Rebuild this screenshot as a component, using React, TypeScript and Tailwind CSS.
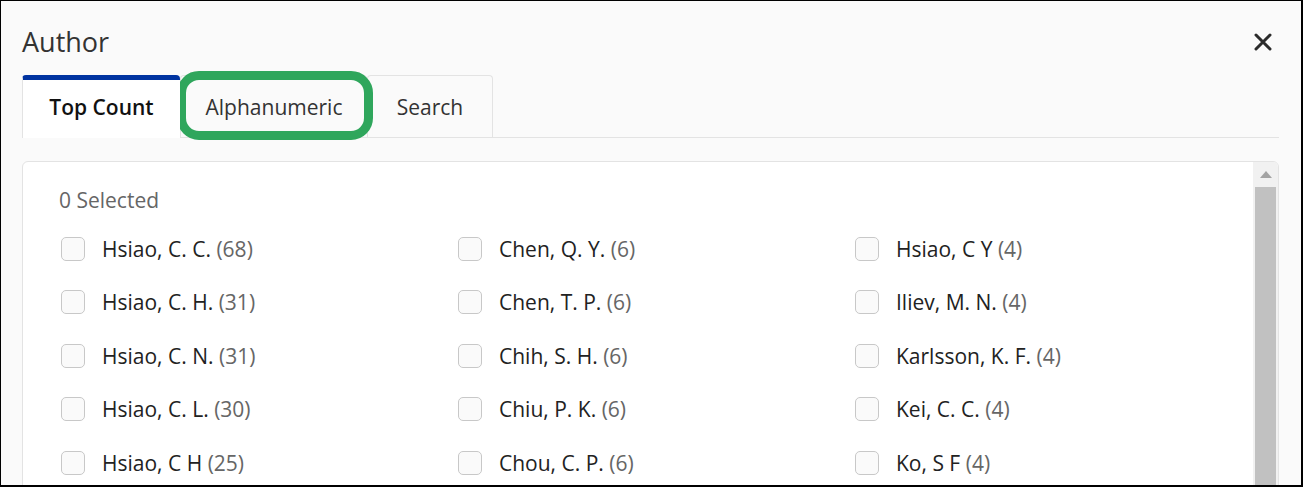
const columns = [
  [
    { name: "Hsiao, C. C.", count: 68 },
    { name: "Hsiao, C. H.", count: 31 },
    { name: "Hsiao, C. N.", count: 31 },
    { name: "Hsiao, C. L.", count: 30 },
    { name: "Hsiao, C H", count: 25 },
  ],
  [
    { name: "Chen, Q. Y.", count: 6 },
    { name: "Chen, T. P.", count: 6 },
    { name: "Chih, S. H.", count: 6 },
    { name: "Chiu, P. K.", count: 6 },
    { name: "Chou, C. P.", count: 6 },
  ],
  [
    { name: "Hsiao, C Y", count: 4 },
    { name: "Iliev, M. N.", count: 4 },
    { name: "Karlsson, K. F.", count: 4 },
    { name: "Kei, C. C.", count: 4 },
    { name: "Ko, S F", count: 4 },
  ],
];

export default function App() {
  return (
    <div
      className="h-[487px] w-[1303px] overflow-hidden bg-[#fafafa] border-l border-t border-r-2 border-b-2 border-black pl-[21px] pr-[22px]"
      style={{ fontFamily: '"Open Sans", "Liberation Sans", sans-serif' }}
    >
      {/* Header */}
      <div className="flex h-[74px] items-start justify-between pt-[22px]">
        <h2 className="text-[27px] leading-[38px] text-[#333]">Author</h2>
        <button className="mr-[7px] mt-[10px] text-[#2b2b2b]" aria-label="Close">
          <svg width="18" height="18" viewBox="0 0 18 18" fill="none" stroke="currentColor" strokeWidth="3" strokeLinecap="round">
            <path d="M2 2 L16 16 M16 2 L2 16" />
          </svg>
        </button>
      </div>

      {/* Tabs */}
      <div className="relative flex h-[63px] border-b border-[#e3e3e3]">
        <div className="relative z-10 -mb-px flex h-[63px] w-[158px] items-center justify-center rounded-t-[4px] border-l border-[#e3e3e3] border-t-[5px] border-t-[#0033a0] bg-white pb-[2px] text-[21px] font-semibold text-[#111]">
          Top Count
        </div>
        <div className="flex h-[62px] w-[187px] items-center justify-center rounded-t-[4px] border-l border-t border-[#e3e3e3] pt-[2px] text-[21px] text-[#333]">
          Alphanumeric
        </div>
        <div className="flex h-[62px] w-[126px] items-center justify-center rounded-t-[4px] border-l border-r border-t border-[#e3e3e3] pt-[2px] text-[21px] text-[#333]">
          Search
        </div>
        <div className="pointer-events-none absolute left-[155px] top-[-4px] h-[69px] w-[196px] rounded-[22px] border-[9px] border-[#2fa65c]" />
      </div>

      {/* Content box */}
      <div className="mt-[23px] flex h-[400px] overflow-hidden rounded-[6px] border border-[#e3e3e3] bg-white">
        <div className="flex-1 pl-[36px] pt-[24px]">
          <div className="text-[21px] leading-[28px] text-[#666]">0 Selected</div>
          <div className="mt-[8px] flex">
            {columns.map((col, ci) => (
              <div key={ci} className="flex w-[397px] flex-col">
                {col.map((item) => (
                  <label key={item.name} className="flex h-[53.5px] items-center gap-[17px]">
                    <span className="ml-[2px] h-[24px] w-[24px] shrink-0 rounded-[5px] border border-[#c8c8c8] bg-[#fafafa]" />
                    <span className="text-[21px] leading-[28px] text-[#222]">
                      {item.name} <span className="text-[#666]">({item.count})</span>
                    </span>
                  </label>
                ))}
              </div>
            ))}
          </div>
        </div>
        {/* Scrollbar */}
        <div className="flex w-[25px] flex-col bg-[#f1f1f1]">
          <div className="flex h-[25px] items-center justify-center">
            <svg width="12" height="7" viewBox="0 0 12 7">
              <path d="M6 0 L12 7 L0 7 Z" fill="#a3a3a3" />
            </svg>
          </div>
          <div className="mx-[2px] flex-1 bg-[#c1c1c1]" />
        </div>
      </div>
    </div>
  );
}
